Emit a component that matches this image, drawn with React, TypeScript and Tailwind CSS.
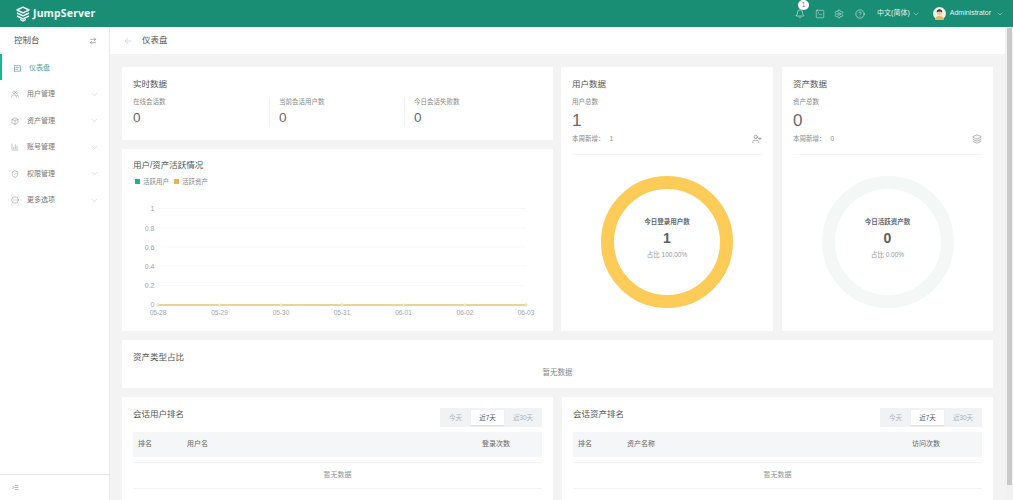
import { ArrowLeft, ArrowRightLeft, Bell, ChevronDown, CircleHelp, Settings, SquareTerminal, Layers, UserPlus, Users, Box, ChartColumn, ShieldCheck, CircleEllipsis, Indent } from "lucide-react";

const font = { fontFamily: '"Liberation Sans", "Noto Sans CJK SC", sans-serif' };

function Logo() {
  return (
    <svg width="16" height="16" viewBox="0 0 16 16" fill="none" stroke="#fff" strokeWidth="1.4" strokeLinejoin="round">
      <path d="M8 1.2 14 4 8 6.8 2 4Z" />
      <path d="M2 7 8 9.8 14 7" />
      <path d="M2 10 8 12.8 14 10" />
      <path d="M5 13.4 8 14.8 11 13.4" />
    </svg>
  );
}

function Avatar() {
  return (
    <svg width="13" height="13" viewBox="0 0 13 13">
      <circle cx="6.5" cy="6.5" r="6.5" fill="#f4efe3" />
      <path d="M2 13c0-3 2-4 4.5-4S11 10 11 13Z" fill="#e9b85c" />
      <circle cx="6.5" cy="5.6" r="2.7" fill="#f2c9a5" />
      <path d="M3.7 5.2C3.8 3 5 2.2 6.5 2.2S9.2 3 9.3 5.2C8 4.4 5 4.4 3.7 5.2Z" fill="#3c3a38" />
    </svg>
  );
}

function DashIcon() {
  return (
    <svg width="7" height="7" viewBox="0 0 7 7" fill="none" stroke="currentColor" strokeWidth="0.7">
      <rect x="0.4" y="0.8" width="6.2" height="5.4" />
      <path d="M1.6 2.6h3.8M1.6 4.4h2.4" />
    </svg>
  );
}

function Header() {
  return (
    <header className="h-[27px] bg-[#1a8e75] flex items-center text-white shrink-0">
      <div className="flex items-center pl-[15px] gap-[2px]">
        <Logo />
        <span className="text-[10.5px] font-bold tracking-[0.15px] text-[#eef8f5]" style={{ fontFamily: '"Noto Sans", sans-serif' }}>JumpServer</span>
      </div>
      <div className="ml-auto flex items-center text-[#e3f1ee]">
        <div className="relative mr-[10px]">
          <Bell size={10} strokeWidth={1.5} />
          <span className="absolute -top-[9px] left-[3px] w-[11px] h-[10px] rounded-full bg-white text-[#777] text-[6.5px] leading-[10px] text-center">1</span>
        </div>
        <SquareTerminal size={10} strokeWidth={1.2} className="mr-[9px]" />
        <Settings size={10} strokeWidth={1.3} className="mr-[11px]" />
        <CircleHelp size={10} strokeWidth={1.4} className="mr-[12px]" />
        <span className="text-[7px]">中文(简体)</span>
        <ChevronDown size={8} strokeWidth={1.3} className="ml-[2px] mr-[13px]" />
        <Avatar />
        <span className="text-[7px] ml-[4px]">Administrator</span>
        <ChevronDown size={8} strokeWidth={1.3} className="ml-[5px] mr-[9px]" />
      </div>
    </header>
  );
}

const menu = [
  { label: "用户管理", Icon: Users },
  { label: "资产管理", Icon: Box },
  { label: "账号管理", Icon: ChartColumn },
  { label: "权限管理", Icon: ShieldCheck },
  { label: "更多选项", Icon: CircleEllipsis },
];

function Sidebar() {
  return (
    <aside className="w-[110px] shrink-0 bg-white border-r border-[#e8eaea] flex flex-col">
      <div className="h-[27px] flex items-center justify-between pl-[14px] pr-[12px] text-[8.5px] text-[#555]">
        <span>控制台</span>
        <ArrowRightLeft size={8} strokeWidth={1.3} />
      </div>
      <div className="h-[26px] pt-[2px] flex items-center border-l-2 border-[#1ab394] pl-[12px] text-[7px] text-[#5aa898]">
        <DashIcon />
        <span className="ml-[8px]">仪表盘</span>
      </div>
      {menu.map(({ label, Icon }) => (
        <div key={label} className="h-[26.5px] pt-[2px] flex items-center pl-[11px] pr-[10px] text-[7px] text-[#777]">
          <Icon size={8} strokeWidth={1.3} />
          <span className="ml-[8px]">{label}</span>
          <ChevronDown size={9} strokeWidth={1} className="ml-auto text-[#aaa]" />
        </div>
      ))}
      <div className="mt-auto h-[26px] border-t border-[#e4e6e6] flex items-center pl-[12px] text-[#666]">
        <Indent size={7} strokeWidth={1.5} />
      </div>
    </aside>
  );
}

function Stat({ label, value, border }: { label: string; value: string; border?: boolean }) {
  return (
    <div className={border ? "border-l border-[#f2f2f2] pl-[9px] -ml-[1px]" : ""}>
      <div className="text-[6.5px] leading-[9px] text-[#8a8a8a]">{label}</div>
      <div className="text-[13.5px] leading-[18px] mt-[3px] text-[#676a6c]">{value}</div>
    </div>
  );
}

function Realtime() {
  return (
    <section className="bg-white h-[73px] px-[11px] pt-[11px]">
      <h3 className="text-[8.5px] leading-[12px] text-[#555]">实时数据</h3>
      <div className="flex mt-[7px]">
        <div className="w-[137px]"><Stat label="在线会话数" value="0" /></div>
        <div className="w-[135px]"><Stat label="当前会话用户数" value="0" border /></div>
        <div className="w-[127px]"><Stat label="今日会话失败数" value="0" border /></div>
      </div>
    </section>
  );
}

const xs = [158, 219.5, 281, 342, 403.5, 465, 526];
const xLabels = ["05-28", "05-29", "05-30", "05-31", "06-01", "06-02", "06-03"];
const grid: [string, number][] = [["1", 208.5], ["0.8", 228], ["0.6", 247], ["0.4", 266], ["0.2", 285.5]];

function ChartCard() {
  return (
    <section className="bg-white h-[182px] mt-[9px] px-[11px] pt-[10px] flex flex-col">
      <h3 className="text-[8.5px] leading-[12px] text-[#555]">用户/资产活跃情况</h3>
      <div className="flex items-center mt-[6px] text-[6.5px] leading-[9px] text-[#888]">
        <span className="w-[5px] h-[5px] bg-[#1ab394] ml-[2px] mr-[3px]" />
        <span>活跃用户</span>
        <span className="w-[5px] h-[5px] bg-[#e9b44c] ml-[5px] mr-[3px]" />
        <span>活跃资产</span>
      </div>
      <svg width="431" height="140" viewBox="122 186 431 140" className="-ml-[11px] block">
        {grid.map(([l, y]) => (
          <g key={l}>
            <line x1="158" x2="526" y1={y} y2={y} stroke="#f4f5f5" strokeWidth="0.7" />
            <text x="154.5" y={y + 2.5} textAnchor="end" fontSize="7" fill="#a3a6ab" style={font}>{l}</text>
          </g>
        ))}
        <text x="154.5" y="306.5" textAnchor="end" fontSize="7" fill="#a3a6ab" style={font}>0</text>
        <line x1="158" x2="526" y1="305" y2="305" stroke="#e2c672" strokeWidth="1.3" />
        {xs.map((x, i) => (
          <g key={x}>
            <circle cx={x} cy="305" r="1.3" fill="#f3ecd2" stroke="#e2d9ae" strokeWidth="0.5" />
            <text x={x} y="315" textAnchor="middle" fontSize="6.5" fill="#a3a6ab" style={font}>{xLabels[i]}</text>
          </g>
        ))}
      </svg>
    </section>
  );
}

function DataCard({ title, totalLabel, total, added, icon, ring, donutTitle, donutValue, donutRatio, width }: {
  title: string; totalLabel: string; total: string; added: string; icon: React.ReactNode; ring: string;
  donutTitle: string; donutValue: string; donutRatio: string; width: string;
}) {
  return (
    <section className={`bg-white h-[264px] px-[11px] pt-[11px] flex flex-col ${width}`}>
      <h3 className="text-[8.5px] leading-[12px] text-[#555]">{title}</h3>
      <div className="text-[6.5px] leading-[9px] text-[#8a8a8a] mt-[7px]">{totalLabel}</div>
      <div className="text-[17px] leading-[20px] mt-[5px] text-[#676a6c]">{total}</div>
      <div className="flex items-center justify-between h-[11px] mt-[2px] text-[6.5px] text-[#8a8a8a]">
        <span>本周新增：<span className="ml-[5px]">{added}</span></span>
        {icon}
      </div>
      <div className="h-px bg-[#f6f6f6] mt-[10px]" />
      <div className={`w-[132px] h-[132px] rounded-full border-[13px] ${ring} mx-auto mt-[21px] flex flex-col items-center justify-center`}>
        <div className="text-[6.5px] leading-[9px] font-bold text-[#66696d] -mt-[9px]">{donutTitle}</div>
        <div className="text-[14px] leading-[18px] font-bold text-[#5c5f63] mt-[3px]">{donutValue}</div>
        <div className="text-[6.5px] leading-[9px] text-[#94979b] mt-[3px]">{donutRatio}</div>
      </div>
    </section>
  );
}

function Rank({ title, col, count, countW, className }: { title: string; col: string; count: string; countW: string; className: string }) {
  return (
    <section className={`bg-white h-[103px] px-[11px] pt-[11px] ${className}`}>
      <div className="flex items-start justify-between">
        <h3 className="text-[8.5px] leading-[12px] text-[#555]">{title}</h3>
        <div className="w-[102px] h-[19px] bg-[#f1f2f4] flex items-center text-[6.5px] text-[#b0b2b6] mb-[5px]">
          <span className="w-[31px] text-center">今天</span>
          <span className="w-[33px] h-[15px] leading-[15px] bg-white text-center text-[#555] shadow-[0_1px_1px_rgba(0,0,0,0.08)]">近7天</span>
          <span className="flex-1 text-center">近30天</span>
        </div>
      </div>
      <div className="h-[25px] bg-[#f5f6f7] flex items-center text-[7px] text-[#666]">
        <span className="w-[54px] pl-[5px]">排名</span>
        <span className="flex-1">{col}</span>
        <span className={countW}>{count}</span>
      </div>
      <div className="h-[27px] mt-[5px] flex items-center justify-center border-y border-[#f4f4f4] text-[7px] text-[#929292]">暂无数据</div>
    </section>
  );
}

export default function App() {
  return (
    <div className="w-[1013px] h-[500px] overflow-hidden flex flex-col bg-[#f3f3f4]" style={font}>
      <Header />
      <div className="flex flex-1 min-h-0">
        <Sidebar />
        <main className="flex-1 min-w-0 flex min-h-0">
          <div className="flex-1 min-w-0 flex flex-col">
            <div className="h-[27px] bg-white flex items-center pl-[13px] shrink-0">
              <ArrowLeft size={10} strokeWidth={1.2} className="text-[#b5b5b5]" />
              <span className="ml-[9px] text-[8.5px] text-[#555]">仪表盘</span>
            </div>
            <div className="flex-1 pl-[12px] pt-[13px] overflow-hidden">
              <div className="flex">
                <div className="w-[431px] shrink-0">
                  <Realtime />
                  <ChartCard />
                </div>
                <DataCard
                  width="w-[212px] ml-[8px]"
                  title="用户数据" totalLabel="用户总数" total="1" added="1"
                  icon={<UserPlus size={10} strokeWidth={1.2} className="text-[#666]" />}
                  ring="border-[#fdcb57]" donutTitle="今日登录用户数" donutValue="1" donutRatio="占比 100.00%"
                />
                <DataCard
                  width="w-[211px] ml-[9px]"
                  title="资产数据" totalLabel="资产总数" total="0" added="0"
                  icon={<Layers size={10} strokeWidth={1.2} className="text-[#666]" />}
                  ring="border-[#f3f8f6]" donutTitle="今日活跃资产数" donutValue="0" donutRatio="占比 0.00%"
                />
              </div>
              <section className="w-[871px] h-[48px] bg-white mt-[9px] px-[11px] pt-[11px]">
                <h3 className="text-[8.5px] leading-[12px] text-[#555]">资产类型占比</h3>
                <div className="text-center text-[7.5px] text-[#888] mt-[4px]">暂无数据</div>
              </section>
              <div className="flex mt-[9px] w-[871px]">
                <Rank className="w-[431px]" title="会话用户排名" col="用户名" count="登录次数" countW="w-[60px]" />
                <Rank className="w-[431px] ml-[9px]" title="会话资产排名" col="资产名称" count="访问次数" countW="w-[70px]" />
              </div>
            </div>
          </div>
          <div className="w-[8px] shrink-0 bg-[#f1f1f1] pt-[1px] pl-[2px]">
            <div className="w-[5px] h-[457px] bg-[#c9c9c9]" />
          </div>
        </main>
      </div>
    </div>
  );
}
